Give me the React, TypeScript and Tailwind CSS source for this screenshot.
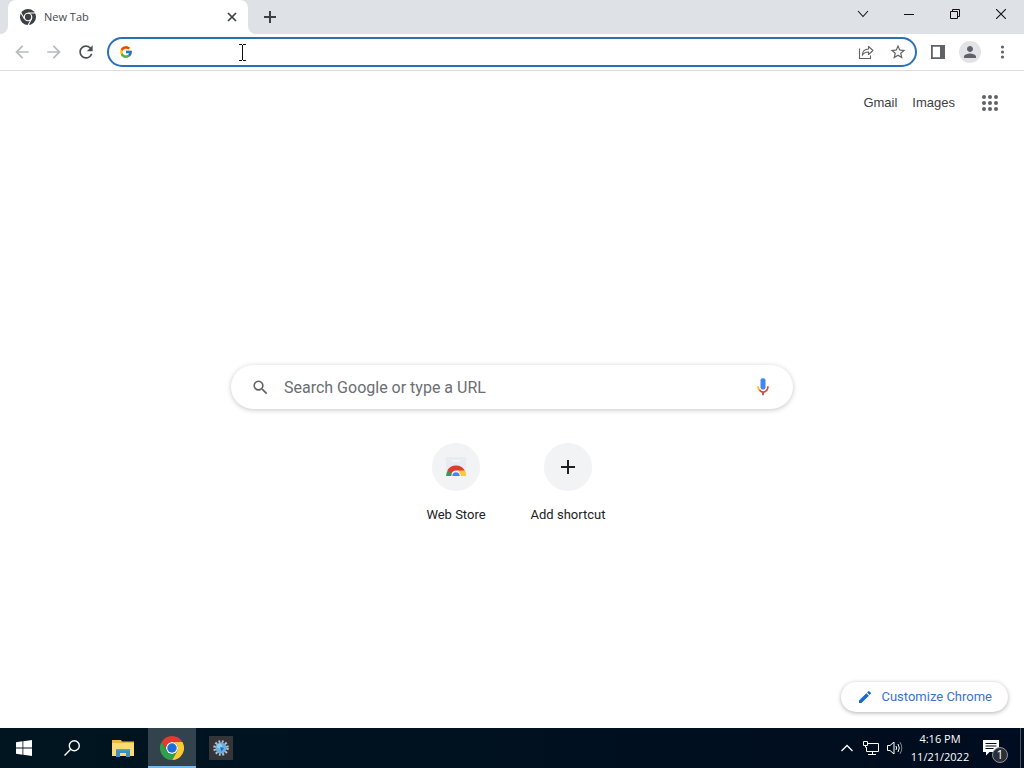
import React from "react";
import { FcGoogle } from "react-icons/fc";
import {
  MdAdd,
  MdArrowBack,
  MdArrowForward,
  MdEdit,
  MdPerson,
  MdRefresh,
  MdSearch,
  MdStarOutline,
} from "react-icons/md";

const RED_ARC =
  "M24,12H44.7812a23.9939,23.9939,0,0,0-41.5639.0029L13.6079,30l.0093-.0024A11.9852,11.9852,0,0,1,24,12Z";
const YELLOW_ARC =
  "M34.3913,30.0029,24.0007,48A23.994,23.994,0,0,0,44.78,12.0031H23.9989l-.0025.0093A11.985,11.985,0,0,1,34.3913,30.0029Z";
const GREEN_ARC =
  "M13.6086,30.0031,3.218,12.006A23.994,23.994,0,0,0,24.0025,48L34.3931,30.0029l-.0067-.0068a11.9852,11.9852,0,0,1-20.7778.007Z";

function ChromeLogo({ className }: { className?: string }) {
  return (
    <svg viewBox="0 0 48 48" className={className} aria-hidden="true">
      <circle cx="24" cy="24" r="12" fill="#fff" />
      <path d={RED_ARC} fill="#e33b2e" />
      <path d={YELLOW_ARC} fill="#fcc934" />
      <path d={GREEN_ARC} fill="#2fa04e" />
      <circle cx="24" cy="24" r="9.5" fill="#1b6fd6" />
    </svg>
  );
}

function ChromeMono({ className }: { className?: string }) {
  return (
    <svg viewBox="1 1 46 46" className={className} aria-hidden="true">
      <circle cx="24" cy="24" r="23" fill="#3c4043" />
      <path
        d="M24 12.500H45M14 30L3.500 12M34 30L24 48"
        stroke="#fff"
        strokeWidth="3"
      />
      <circle cx="24" cy="24" r="12.500" fill="#fff" />
      <circle cx="24" cy="24" r="9" fill="#3c4043" />
    </svg>
  );
}

function TabStrip() {
  return (
    <header className="flex h-[34px] bg-[#dee1e6]">
      <div className="w-2 bg-white">
        <div className="h-full rounded-br-lg bg-[#dee1e6]" />
      </div>
      <div className="flex w-60 items-center rounded-t-lg bg-white pr-2 pl-3 text-[11px] text-[#45494d]">
        <ChromeMono className="size-4" />
        <span className="ml-2 flex-1">New Tab</span>
        <button aria-label="Close tab" className="grid size-4 place-items-center text-[#3c4043]">
          <svg viewBox="0 0 10 10" className="size-[10px]" stroke="currentColor" strokeWidth="1.700">
            <path d="M1 1l8 8M9 1L1 9" />
          </svg>
        </button>
      </div>
      <div className="flex-1 bg-white">
        <div className="flex h-full rounded-bl-lg bg-[#dee1e6]">
          <button aria-label="New tab" className="ml-2 grid w-7 place-items-center text-[#3c4043]">
            <svg viewBox="0 0 14 14" className="size-[14px]" stroke="currentColor" strokeWidth="2">
              <path d="M7 1v12M1 7h12" />
            </svg>
          </button>
          <div className="ml-auto flex h-7 text-[#111]">
            <button aria-label="Search tabs" className="grid w-[46px] place-items-center">
              <svg viewBox="0 0 12 12" className="size-3" fill="none" stroke="currentColor" strokeWidth="1.1">
                <path d="M1 3l5 5.500 5-5.500" />
              </svg>
            </button>
            <button aria-label="Minimize" className="grid w-[46px] place-items-center">
              <svg viewBox="0 0 10 10" className="size-[10px]" stroke="currentColor">
                <path d="M0 5.500h10" />
              </svg>
            </button>
            <button aria-label="Restore" className="grid w-[46px] place-items-center">
              <svg viewBox="0 0 10 10" className="size-[10px]" fill="none" stroke="currentColor">
                <path d="M.5 2.500h7v7h-7zM2.500 2.500v-2h7v7h-2" />
              </svg>
            </button>
            <button aria-label="Close window" className="grid w-[46px] place-items-center">
              <svg viewBox="0 0 10 10" className="size-[10px]" stroke="currentColor" strokeWidth="1.1">
                <path d="M0 0l10 10M10 0L0 10" />
              </svg>
            </button>
          </div>
        </div>
      </div>
    </header>
  );
}

function Toolbar() {
  return (
    <nav className="flex h-[37px] items-center border-b border-[#dcdee1] bg-white px-[6px] text-[#5f6368]">
      <button aria-label="Back" className="grid size-8 place-items-center text-[#b8babd]">
        <MdArrowBack className="size-5" />
      </button>
      <button aria-label="Forward" className="grid size-8 place-items-center text-[#b8babd]">
        <MdArrowForward className="size-5" />
      </button>
      <button aria-label="Reload" className="grid size-8 place-items-center text-[#4b4f53]">
        <MdRefresh className="size-5" />
      </button>
      <div className="relative mx-[5px] flex h-[30px] flex-1 items-center rounded-full border-2 border-[#2a70b8] bg-white pr-px pl-[10px]">
        <FcGoogle className="size-[14px]" />
        <input aria-label="Address and search bar" className="ml-2 h-6 min-w-0 flex-1 text-sm outline-none" />
        <button aria-label="Share this page" className="grid h-6 w-8 place-items-center">
          <svg viewBox="0 0 16 16" className="size-4" fill="none" stroke="currentColor" strokeWidth="1.1">
            <path d="M1.500 4.500v10h11v-3" />
            <path d="M10.500 2.500l4.500 4-4.500 4V8C7.500 8 5.500 9 4.300 11.300 4.500 7.500 6.700 5.200 10.500 5z" strokeLinejoin="round" />
          </svg>
        </button>
        <button aria-label="Bookmark this tab" className="grid h-6 w-8 place-items-center">
          <MdStarOutline className="size-[18px]" />
        </button>
        <svg viewBox="0 0 9 17" className="absolute top-[5px] left-[129px] h-[17px] w-[9px]" stroke="#111" fill="none" aria-hidden="true">
          <path d="M1 .5h3M5 .5h3M4.500 1v15M1 16.500h3M5 16.500h3" />
        </svg>
      </div>
      <button aria-label="Side panel" className="grid size-8 place-items-center">
        <svg viewBox="0 0 14 14" className="size-[14px]" fill="currentColor">
          <path d="M0 0h14v14H0zM1.800 1.800v10.400H9V1.800z" fillRule="evenodd" />
        </svg>
      </button>
      <button aria-label="Profile" className="grid size-8 place-items-center">
        <span className="grid size-[22px] place-items-center rounded-full bg-[#e1e3e6]">
          <MdPerson className="size-[18px]" />
        </span>
      </button>
      <button aria-label="Menu" className="grid size-8 place-items-center">
        <svg viewBox="0 0 14 14" className="size-[14px]" fill="currentColor">
          <circle cx="7.500" cy="2" r="1.600" />
          <circle cx="7.500" cy="7" r="1.600" />
          <circle cx="7.500" cy="12" r="1.600" />
        </svg>
      </button>
    </nav>
  );
}

function NewTabPage() {
  return (
    <main className="flex flex-1 flex-col items-center bg-white font-[Roboto,sans-serif] text-[13px] text-[#202124]">
      <div className="flex h-16 items-center self-end pr-6 font-['Liberation_Sans',Arial,sans-serif] text-[#3c4043]">
        <a href="#gmail">Gmail</a>
        <a href="#images" className="ml-[15px]">Images</a>
        <button aria-label="Google apps" className="ml-[25px] grid size-5 place-items-center text-[#5f6368]">
          <svg viewBox="0 0 16 16" className="size-4" fill="currentColor">
            {[2, 8, 14].map((y) =>
              [2, 8, 14].map((x) => <circle key={x + "-" + y} cx={x} cy={y} r="2" />),
            )}
          </svg>
        </button>
      </div>

      <form
        className="mt-[230px] flex h-11 w-full max-w-[562px] items-center rounded-full bg-white px-5 shadow-[0_1px_5px_rgba(32,33,36,0.26)]"
        onSubmit={(e) => e.preventDefault()}
      >
        <MdSearch className="size-[19px] text-[#5f6368]" />
        <input
          aria-label="Search Google or type a URL"
          placeholder="Search Google or type a URL"
          className="ml-[14px] h-6 min-w-0 flex-1 pt-px text-base outline-none placeholder:text-[#6b6e72]"
        />
        <button aria-label="Search by voice" className="grid size-5 place-items-center">
          <svg viewBox="0 0 24 24" className="size-5">
            <rect x="9" y="1.500" width="6" height="13.500" rx="2.500" fill="#4285f4" />
            <path d="M10.900 18h2.200v4h-2.200z" fill="#b4574a" />
            <path d="M5 11h2c0 1.500.5 2.700 1.500 3.600l-1.500 1.500C5.700 14.800 5 13.100 5 11z" fill="#fbbc04" />
            <path d="M12 19c-2 0-3.700-.8-5-2.900l1.500-1.500C9.400 15.900 10.600 17 12 17c3 0 5-2.500 5-6h2c0 4.500-3 8-7 8z" fill="#ea4335" />
          </svg>
        </button>
      </form>

      <div className="mt-[34px] flex">
        <a href="#webstore" className="flex w-28 flex-col items-center">
          <span className="grid size-12 place-items-center rounded-full bg-[#f1f3f4]">
            <svg viewBox="0 0 20 20" className="size-5" aria-hidden="true">
              <path d="M0 0h20v19H0z" fill="#e8ebef" />
              <path d="M6 3h8v1.500H6z" fill="#f6f7f8" />
              <path d="M0 19a10 10 0 0 1 3-7l4 7z" fill="#2e9e56" />
              <path d="M12 19l1-6h5.500a10 10 0 0 1 1.500 6z" fill="#fbc934" />
              <path d="M1.300 13.500A10 10 0 0 1 18.700 13.500H10a5 5 0 0 0-4.600 3z" fill="#dc3b30" />
              <path d="M5.300 19a4.700 4.700 0 0 1 9.400 0z" fill="#fff" />
              <path d="M6.300 19a3.700 3.700 0 0 1 7.400 0z" fill="#4285f4" />
            </svg>
          </span>
          <span className="mt-[14px] leading-5">Web Store</span>
        </a>
        <button className="flex w-28 flex-col items-center">
          <span className="grid size-12 place-items-center rounded-full bg-[#f1f3f4]">
            <MdAdd className="size-6" />
          </span>
          <span className="mt-[14px] leading-5">Add shortcut</span>
        </button>
      </div>

      <button className="mt-auto mr-4 mb-4 flex h-[30px] items-center self-end rounded-full bg-white px-4 text-[#3b73c8] shadow-[0_1px_4px_rgba(32,33,36,0.35)]">
        <MdEdit className="size-4 text-[#1a68d0]" />
        <span className="ml-2">Customize Chrome</span>
      </button>
    </main>
  );
}

function Taskbar() {
  return (
    <footer className="flex h-10 items-stretch bg-linear-to-r from-[#001520] to-[#000c1f] text-white">
      <button aria-label="Start" className="grid w-12 place-items-center">
        <svg viewBox="0 0 16 16" className="size-4" fill="currentColor">
          <path d="M0 2.200l6.500-.9v6.200H0zM7.300 1.200L16 0v7.500H7.300zM0 8.400h6.500v6.300L0 13.800zM7.300 8.400H16V16l-8.700-1.200z" />
        </svg>
      </button>
      <button aria-label="Search" className="grid w-12 place-items-center">
        <svg viewBox="0 0 16 16" className="size-4" fill="none" stroke="currentColor" strokeWidth="1.400">
          <circle cx="10.300" cy="5.700" r="5" />
          <path d="M6.700 9.300L.5 15.500" />
        </svg>
      </button>
      <button aria-label="File Explorer" className="ml-[3px] grid w-12 place-items-center">
        <svg viewBox="0 0 22 18" className="h-[18px] w-[22px]">
          <path d="M0 1h9l1 1.500h12V17H0z" fill="#e9b93f" />
          <path d="M0 4h22v13H0z" fill="#fbdc74" />
          <path d="M4 10h14v8h-4v-4H8v4H4z" fill="#3f8fb8" />
          <path d="M4 10h14v1.500H4z" fill="#55a3c9" />
        </svg>
      </button>
      <button aria-label="Google Chrome" className="ml-px grid w-12 place-items-center border-b-2 border-[#76b9ed] bg-[#33434d] pt-[2px]">
        <ChromeLogo className="size-6" />
      </button>
      <button aria-label="Settings tool" className="grid w-[50px] place-items-center">
        <svg viewBox="0 0 24 24" className="size-6">
          <path d="M0 0h24v24H0z" fill="#333538" />
          <circle cx="12" cy="12" r="6.300" fill="none" stroke="#b9bfc5" strokeWidth="3" strokeDasharray="1.800 1.500" />
          <circle cx="12" cy="12" r="5.500" fill="#6aaee4" />
          <circle cx="10.500" cy="10" r="2.500" fill="#93cbf2" />
          <path d="M11 11l4 1-2.500 3.500z" fill="#1b70bd" />
        </svg>
      </button>

      <div className="ml-auto flex items-center">
        <button aria-label="Show hidden icons" className="grid h-full w-6 place-items-center">
          <svg viewBox="0 0 12 8" className="h-2 w-3" fill="none" stroke="currentColor" strokeWidth="1.300">
            <path d="M.5 7L6 1.500 11.500 7" />
          </svg>
        </button>
        <button aria-label="Network" className="grid h-full w-6 place-items-center">
          <svg viewBox="0 0 16 14" className="h-[14px] w-4" fill="none" stroke="currentColor">
            <path d="M5 2.500h10.500v8H3.500V6M9.500 10.500v3M5 13.500h8M.5.500h4v4h-4zM2.500 4.500v2" />
          </svg>
        </button>
        <button aria-label="Volume" className="grid h-full w-6 place-items-center">
          <svg viewBox="0 0 16 14" className="h-[14px] w-4" fill="none" stroke="currentColor">
            <path d="M.5 4.500h2.500L7 1v12L3 9.500H.5z" />
            <path d="M9 5q1.200 2 0 4M11 3q2.600 4 0 8" />
            <path d="M13 1.200q3.600 5.800 0 11.600" opacity=".5" />
          </svg>
        </button>
        <button className="w-[66px] text-center text-[11px] leading-[18px]">
          <time className="block">4:16 PM</time>
          <time className="block">11/21/2022</time>
        </button>
        <button aria-label="Notifications, 1 new" className="relative grid h-full w-12 place-items-center border-r border-[#4b5560]">
          <svg viewBox="0 0 16 16" className="mr-3 size-4">
            <path d="M0 0h16v12H6.500L3 15.500V12H0z" fill="#fff" />
            <path d="M2.500 3.500h11M2.500 6h11M2.500 8.500h8" stroke="#000c1f" />
          </svg>
          <span className="absolute top-[19px] left-[19px] grid size-4 place-items-center rounded-full border border-[#8b939c] bg-[#2b3036] text-xs leading-none">
            1
          </span>
        </button>
        <button aria-label="Show desktop" className="h-full w-[3px]" />
      </div>
    </footer>
  );
}

export default function App() {
  return (
    <div className="flex min-h-screen flex-col font-['Open_Sans','Noto_Sans',sans-serif]">
      <TabStrip />
      <Toolbar />
      <NewTabPage />
      <Taskbar />
    </div>
  );
}
